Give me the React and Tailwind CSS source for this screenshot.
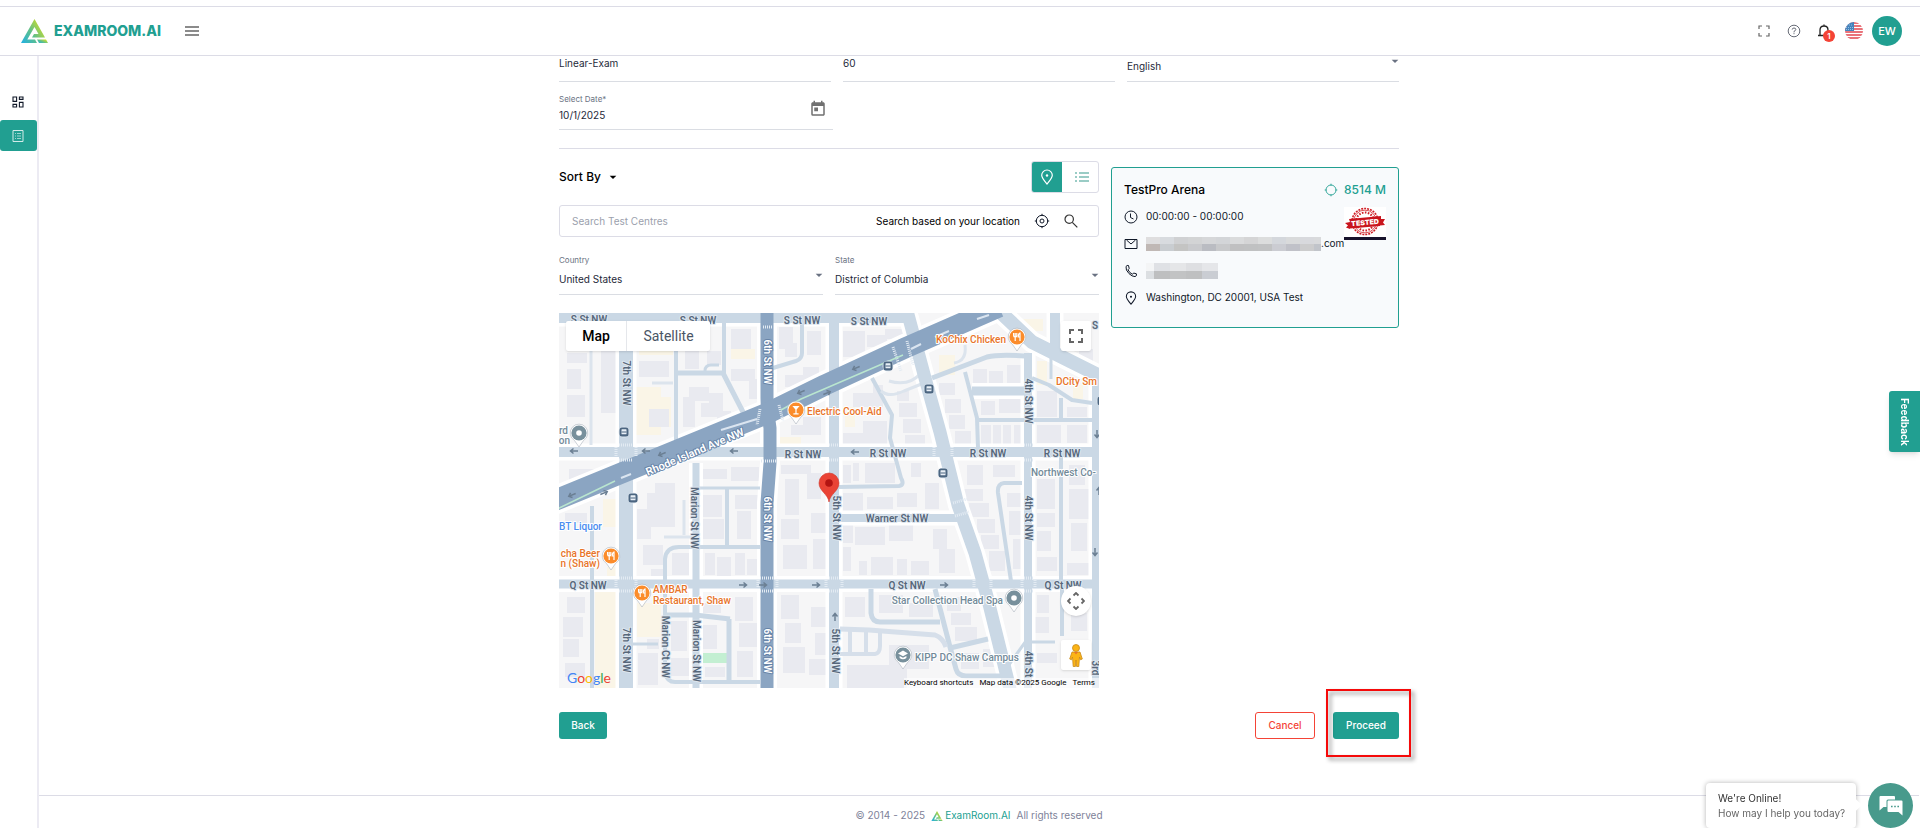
import React, { useState } from "react";
import { MdArrowDropDown, MdToday } from "react-icons/md";

// ----------------- Map data -----------------
// [path, width, color]
const ROAD = "#cad8e5";
const HIGHWAY = "#8ba5c2";

const STREETS = [
  // alleys
  ["M32 9V132", 3, "#dce4ed"],
  ["M33 193V375", 4, ROAD],
  ["M117 10V134", 4, ROAD],
  ["M117 60H164L184 99", 5, ROAD],
  ["M165 9V60", 4, ROAD],
  ["M93 70H114", 3, "#dce4ed"],
  ["M146 58Q146 52 152 52H160", 3, ROAD],
  ["M214 55L237 48Q243 46 243 40V9", 4, ROAD],
  ["M137 175H201", 3, ROAD],
  ["M168 175V234", 4, ROAD],
  ["M201 234H120Q107 234 106 246V360Q108 369 116 369H201", 4, ROAD],
  ["M106 302H136L171 306", 5, ROAD],
  ["M170 306V369", 5, ROAD],
  ["M74 331H99", 3, ROAD],
  ["M105 224H137M125 187V222", 3, "#dce4ed"],
  ["M313 65L333 102L331 125L342 165Q346 172 340 173L279 174", 4, ROAD],
  ["M373 65L428 44Q440 41 466 43", 5, ROAD],
  ["M406 59L418 105L419 135", 4, ROAD],
  ["M413 78H466", 9, ROAD],
  ["M418 107H533", 4, ROAD],
  ["M473 65L490 72L513 87L533 90M502 85V106", 4, ROAD],
  ["M492 30V66", 3, ROAD],
  ["M502 143V268M503 276V323", 4, ROAD],
  ["M463 170H445Q438 171 439 180L452 268", 4, ROAD],
  ["M312 276V300Q313 309 321 309H381", 5, ROAD],
  ["M376 276L391 334L397 356Q399 363 407 363H443", 5, ROAD],
  ["M391 335L429 326", 5, ROAD],
  ["M281 316L310 317L376 322Q384 325 387 334", 5, "#d6dfea"],
  ["M281 341H316Q321 340 321 333V319M291 318V341M307 318V341", 4, "#d6dfea"],
  ["M469 329H496M449 353L467 328", 3, ROAD],
  ["M322 78Q330 85 345 78L365 70M330 68Q350 74 362 60M395 50Q408 48 406 32", 3, "#dce4ed"],
  // main streets
  ["M0 4H350", 12, ROAD],
  ["M0 139H540", 10, ROAD],
  ["M0 271H540", 9, ROAD],
  ["M275 205H399", 8, ROAD],
  ["M67 0V375", 14, ROAD],
  ["M137 150V375", 7, ROAD],
  ["M275 0V375", 10, ROAD],
  ["M469 40V375", 8, ROAD],
  ["M538 60V375", 10, ROAD],
  ["M496 0V36", 10, ROAD],
  ["M436 -6L473 29L545 65", 14, ROAD],
  ["M347 -6L366 65L381 119L399 192L416 240L429 287L452 380", 13, ROAD],
  // arterials
  ["M208 -4V85Q208 95 211 115V150L208 190V375", 13, HIGHWAY],
  ["M-8 189L209 100L266 72L346 35L440 -6", 21, HIGHWAY],
];

const BUILDINGS = [
  [8, 20, 18, 16], [8, 40, 20, 10], [8, 56, 14, 20], [8, 82, 18, 22], [42, 20, 16, 80],
  [80, 48, 30, 16], [90, 96, 20, 18], [126, 18, 18, 10], [126, 34, 14, 22], [148, 38, 14, 14],
  [172, 16, 20, 20], [172, 56, 24, 12], [190, 66, 12, 20], [124, 84, 12, 30], [130, 74, 20, 14],
  [142, 90, 22, 14], [150, 80, 14, 20], [158, 98, 14, 14], [220, 14, 14, 22], [226, 30, 12, 14],
  [248, 18, 14, 24], [226, 62, 18, 12], [244, 54, 16, 14], [10, 156, 44, 14], [232, 112, 24, 10],
  [244, 104, 18, 18], [144, 156, 24, 10], [172, 154, 28, 14], [143, 182, 20, 22], [143, 206, 22, 20],
  [176, 182, 24, 14], [178, 198, 14, 28], [88, 180, 28, 34], [96, 170, 20, 14], [78, 196, 14, 30],
  [84, 232, 20, 20], [92, 256, 12, 8], [113, 240, 18, 22], [146, 240, 10, 22], [158, 244, 14, 20],
  [176, 240, 10, 22], [188, 246, 12, 16], [6, 200, 22, 10], [222, 152, 30, 9], [226, 166, 14, 36],
  [222, 206, 18, 20], [224, 232, 24, 24], [252, 200, 18, 20], [254, 226, 14, 30], [248, 160, 14, 26],
  [8, 284, 18, 16], [4, 304, 20, 20], [4, 326, 16, 18], [6, 350, 20, 14], [79, 340, 20, 32],
  [88, 326, 12, 10], [112, 308, 16, 30], [112, 345, 18, 18], [144, 290, 18, 10], [144, 312, 14, 24],
  [146, 354, 20, 10], [176, 284, 18, 24], [180, 310, 18, 24], [178, 338, 16, 26], [222, 282, 18, 24],
  [226, 310, 16, 20], [224, 334, 22, 26], [252, 294, 16, 20], [256, 320, 14, 22], [250, 346, 20, 16],
  [284, 18, 22, 26], [308, 22, 20, 12], [326, 16, 18, 10], [284, 50, 8, 12], [284, 120, 24, 14],
  [304, 108, 24, 26], [294, 80, 20, 14], [314, 72, 10, 22], [338, 78, 12, 10], [340, 90, 18, 14],
  [344, 106, 18, 14], [346, 122, 20, 12], [284, 152, 8, 18], [294, 150, 6, 18], [306, 150, 30, 20],
  [284, 180, 20, 18], [308, 184, 26, 12], [338, 180, 20, 14], [352, 150, 10, 14], [366, 170, 14, 26],
  [284, 212, 10, 18], [296, 214, 30, 18], [330, 212, 24, 16], [284, 234, 8, 24], [300, 248, 8, 14],
  [312, 244, 22, 18], [338, 246, 10, 16], [352, 248, 18, 14], [374, 216, 14, 20], [380, 236, 16, 24],
  [386, 86, 16, 14], [390, 102, 16, 14], [396, 118, 16, 14], [380, 70, 16, 12], [414, 56, 14, 14],
  [448, 52, 14, 20], [430, 58, 14, 12], [422, 88, 14, 14], [440, 86, 24, 14], [422, 112, 10, 20],
  [434, 112, 8, 20], [444, 112, 8, 20], [455, 112, 8, 20], [478, 112, 24, 18], [508, 112, 20, 18],
  [478, 78, 20, 26], [508, 94, 20, 10], [408, 152, 16, 20], [402, 176, 22, 12], [410, 190, 20, 14],
  [418, 206, 18, 14], [422, 222, 18, 14], [430, 238, 16, 20], [434, 152, 22, 12], [448, 180, 16, 14],
  [450, 198, 14, 24], [454, 226, 10, 30], [478, 166, 18, 30], [478, 200, 18, 14], [478, 218, 14, 20],
  [478, 244, 20, 14], [510, 152, 16, 20], [510, 176, 20, 30], [512, 210, 16, 28], [508, 250, 22, 12],
  [286, 284, 20, 20], [320, 282, 24, 18], [350, 290, 24, 14], [388, 284, 14, 14], [392, 300, 20, 12],
  [396, 314, 22, 14], [402, 340, 18, 16], [424, 336, 12, 18], [288, 352, 60, 26], [330, 332, 40, 24],
  [478, 282, 12, 18], [476, 304, 14, 16], [512, 300, 16, 18], [478, 340, 20, 10], [520, 36, 14, 14],
];

const SHOPS = [
  [80, 18, 34, 24], [76, 74, 26, 48], [100, 84, 12, 30], [44, 186, 16, 28], [48, 254, 12, 10],
  [36, 278, 24, 97], [78, 290, 24, 34], [172, 36, 24, 10], [220, 124, 22, 12], [286, 94, 10, 20],
  [380, 42, 16, 20], [478, 48, 10, 24], [464, 6, 20, 12], [514, 72, 10, 14], [346, 130, 14, 6],
];

// [text, x, y, rotate, light]
const STREET_LABELS = [
  ["S St NW", 30, 6], ["S St NW", 139, 7], ["S St NW", 243, 7], ["S St NW", 310, 8],
  ["R St NW", 244, 141], ["R St NW", 329, 140], ["R St NW", 429, 140], ["R St NW", 503, 140],
  ["Q St NW", 29, 272], ["Q St NW", 348, 272], ["Q St NW", 504, 272], ["Warner St NW", 338, 205],
  ["7th St NW", 67, 70, 90], ["7th St NW", 67, 337, 90],
  ["6th St NW", 208, 49, 90, true], ["6th St NW", 208, 206, 90, true], ["6th St NW", 208, 338, 90, true],
  ["5th St NW", 277, 205, 90], ["5th St NW", 276, 338, 90],
  ["4th St NW", 469, 88, 90], ["4th St NW", 469, 205, 90], ["4th St", 469, 351, 90],
  ["Marion St NW", 135, 205, 90], ["Marion St NW", 137, 338, 90], ["Marion Ct NW", 106, 334, 90],
  ["3rd", 536, 355, 90], ["S", 536, 12],
];

// [text, x, y, anchor, color]
const ORANGE = "#e8742a";
const SLATE = "#728a99";
const PLACES = [
  ["Electric Cool-Aid", 248, 98, "start", ORANGE],
  ["KoChix Chicken", 447, 26, "end", ORANGE],
  ["DCity Sm", 497, 68, "start", ORANGE],
  ["cha Beer", 41, 240, "end", ORANGE],
  ["n (Shaw)", 41, 250, "end", ORANGE],
  ["AMBAR", 94, 276, "start", ORANGE],
  ["Restaurant, Shaw", 94, 287, "start", ORANGE],
  ["BT Liquor", 0, 213, "start", "#4a8df0"],
  ["rd", 9, 117, "end", SLATE],
  ["on", 11, 127, "end", SLATE],
  ["Northwest Co-", 472, 159, "start", SLATE],
  ["Star Collection Head Spa", 444, 287, "end", SLATE],
  ["KIPP DC Shaw Campus", 356, 344, "start", SLATE],
];

const PINS = [
  [237, 97, "#fb8c2b", "bar"], [458, 24, "#fb8c2b", "food"], [52, 243, "#fb8c2b", "food"], [83, 280, "#fb8c2b", "food"],
  [20, 120, "#78909c", "dot"], [455, 285, "#78909c", "dot"], [344, 342, "#78909c", "school"],
];

const BUS_STOPS = [[65, 119], [74, 185], [329, 53], [370, 76], [384, 160], [543, 88]];

// [x, y, rotation], pointing right at 0
const ARROWS = [
  [15, 138, 180], [87, 138, 180], [103, 141, 157], [175, 138, 180], [296, 139, 180], [13, 182, 157], [45, 180, -23],
  [242, 79, 157], [268, 80, -23], [297, 55, 157], [184, 272, 0], [204, 272, 0], [257, 272, 0], [385, 272, 0],
  [276, 304, -90], [538, 121, 90], [536, 239, 90], [540, 178, -90],
];

function Pin({ x, y, color, kind }) {
  return (
    <g transform={`translate(${x} ${y})`}>
      <path d="M0 14L-4.5 7.5A8.8 8.8 0 1 1 4.5 7.5Z" fill="#fff" stroke="#9aa5b1" strokeWidth="0.5" />
      <circle r="7.6" fill={color} />
      {kind === "dot" && <circle r="2.8" fill="#fff" />}
      {kind === "bar" && (
        <path d="M-3.6 -4H3.6L0.6 -0.4V3.2H2.6V4.4H-2.6V3.2H-0.6V-0.4Z" fill="#fff" />
      )}
      {kind === "food" && (
        <path
          d="M-3.4 -4V-1.6Q-3.4 0 -1.8 0V4M-0.2 -4V-1.6Q-0.2 0 -1.8 0V-4M3 4V-4Q1.2 -3.4 1.2 0H3"
          fill="none"
          stroke="#fff"
          strokeWidth="1.2"
        />
      )}
      {kind === "school" && (
        <path d="M-5 -1.6L0 -4.4L5 -1.6L0 1.2ZM-3.4 1V3Q0 5.6 3.4 3V1L0 2.8Z" fill="#fff" />
      )}
    </g>
  );
}

function StreetMap() {
  return (
    <svg
      viewBox="0 0 540 375"
      preserveAspectRatio="xMidYMid slice"
      className="block h-full w-full"
      role="img"
      aria-label="Street map of test centres"
    >
      <rect width="540" height="375" fill="#f6f6f7" />
      <g fill="#faf5e7">
        {SHOPS.map(([x, y, w, h], i) => (
          <rect key={i} x={x} y={y} width={w} height={h} />
        ))}
      </g>
      <g fill="#e9eaf0">
        {BUILDINGS.map(([x, y, w, h], i) => (
          <rect key={i} x={x} y={y} width={w} height={h} />
        ))}
      </g>
      <rect x="143" y="340" width="25" height="10" fill="#c3efd2" />
      <g fill="none" strokeLinejoin="round">
        {STREETS.filter((s) => s[1] > 5).map(([d, w], i) => (
          <path key={i} d={d} stroke="#fff" strokeWidth={w + 7} />
        ))}
        {STREETS.map(([d, w, color], i) => (
          <path key={i} d={d} stroke={color} strokeWidth={w} />
        ))}
        {/* crosswalks */}
        <g stroke="#e3ebf3" strokeWidth="3" strokeDasharray="1 1">
          <path d="M60 132H74M60 147H74M60 265H74M60 278H74M57 134V144M77 134V144M57 267V276M77 267V276" />
          <path d="M202 148H217M201 265H215M201 278H215M204 14H214M199 267V276M218 267V276" />
          <path d="M270 132H280M270 147H280M270 265H280M270 278H280M267 267V276M283 267V276" />
          <path d="M465 132H474M465 147H474M465 265H474M465 278H474M463 267V276M476 267V276M375 134V144M393 134V144M415 267V276M432 267V276" />
          <path d="M348 28L354 52M334 34L342 58M201 96L198 112M220 92L224 108M394 190L408 186M396 203L410 199" />
        </g>
        <path d="M-4 197L56 168" stroke="#b9e6cf" strokeWidth="1.5" />
        <path d="M222 97L242 86M242 86L344 42" stroke="#b9e6cf" strokeWidth="1.5" />
        <path d="M62 165L72 161M162 117L198 106M352 36L362 31M376 24L390 18M418 6L430 2" stroke="#dbe5f0" strokeWidth="2" />
      </g>
      {ARROWS.map(([x, y, r], i) => (
        <path
          key={i}
          d="M-4 0H3M0.5 -2.5L3.5 0L0.5 2.5"
          transform={`translate(${x} ${y}) rotate(${r})`}
          fill="none"
          stroke="#6b7f93"
          strokeWidth="1.5"
        />
      ))}
      {BUS_STOPS.map(([x, y], i) => (
        <g key={i} transform={`translate(${x} ${y})`}>
          <circle r="5.5" fill="#dfe8f1" />
          <rect x="-4.5" y="-4.5" width="9" height="9" rx="2.5" fill="#4b6580" />
          <rect x="-2.5" y="-2.8" width="5" height="5" rx="0.5" fill="#e8eff6" />
          <path d="M-2.5 0H2.5" stroke="#4b6580" />
        </g>
      ))}
      <g
        fontFamily="Roboto, sans-serif"
        fontSize="10"
        fontWeight="600"
        textAnchor="middle"
        dominantBaseline="central"
        paintOrder="stroke"
        strokeWidth="2"
        strokeLinejoin="round"
      >
        {STREET_LABELS.map(([text, x, y, r = 0, light], i) => (
          <text
            key={i}
            transform={`translate(${x} ${y}) rotate(${r})`}
            fill={light ? "#fff" : "#56677a"}
            stroke={light ? "#6784a8" : "#dde6ef"}
          >
            {text}
          </text>
        ))}
        <text transform="translate(136 139) rotate(-23)" fontSize="11" fill="#fff" stroke="#6784a8">
          Rhode Island Ave NW
        </text>
      </g>
      {PINS.map(([x, y, color, kind]) => (
        <Pin key={`${x}-${y}`} x={x} y={y} color={color} kind={kind} />
      ))}
      <g
        fontFamily="Roboto, sans-serif"
        fontSize="10"
        fontWeight="500"
        dominantBaseline="central"
        paintOrder="stroke"
        stroke="#fff"
        strokeWidth="2"
        strokeLinejoin="round"
      >
        {PLACES.map(([text, x, y, anchor, color]) => (
          <text key={text} x={x} y={y} textAnchor={anchor} fill={color}>
            {text}
          </text>
        ))}
      </g>
      {/* selected centre */}
      <path
        d="M270 189C269 181 260 178 260 170A10 10 0 0 1 280 170C280 178 271 181 270 189Z"
        fill="#ea4335"
        stroke="#d0352a"
        strokeWidth="0.6"
      />
      <circle cx="270" cy="170" r="3.8" fill="#b31412" />
    </svg>
  );
}

// ----------------- Small icons -----------------
function LogoMark({ className, id }) {
  return (
    <svg viewBox="0 0 27 24" className={className} aria-hidden="true">
      <defs>
        <linearGradient id={id} x1="0" y1="1" x2="1" y2="0.3">
          <stop offset="0" stopColor="#1fb0e6" />
          <stop offset="0.5" stopColor="#5fc08a" />
          <stop offset="1" stopColor="#d8e021" />
        </linearGradient>
      </defs>
      <path d="M13.5 0L24 18.5H11L13 15H17.5L13.5 8L6.3 20.5H14L16 24H0Z" fill={`url(#${id})`} />
      <path d="M16 20.5H25L27 24H18Z" fill={`url(#${id})`} />
    </svg>
  );
}

function PinIcon({ className }) {
  return (
    <svg viewBox="0 0 16 16" fill="none" stroke="currentColor" className={className} aria-hidden="true">
      <path d="M8 15C5 11.5 2.7 9 2.7 6.3A5.3 5.3 0 0 1 13.3 6.3C13.3 9 11 11.5 8 15Z" strokeWidth="1.2" />
      <circle cx="8" cy="6.5" r="1.2" fill="currentColor" stroke="none" />
    </svg>
  );
}

function ClockIcon() {
  return (
    <svg viewBox="0 0 14 14" fill="none" stroke="currentColor" className="size-[14px]" aria-hidden="true">
      <circle cx="7" cy="7" r="6" />
      <path d="M6.5 3.5V7.5L9.5 9" />
    </svg>
  );
}

function MailIcon() {
  return (
    <svg viewBox="0 0 14 14" fill="none" stroke="currentColor" className="size-[14px]" aria-hidden="true">
      <path d="M1 2.5H13V11.5H1ZM2.5 3L7 7L11.5 3" />
    </svg>
  );
}

function PhoneIcon() {
  return (
    <svg viewBox="0 0 14 14" fill="none" stroke="currentColor" className="size-[14px]" aria-hidden="true">
      <path d="M2 2.5Q3 1 4.5 1.5L5.2 4.5L4 5.8Q5.5 9 8.5 10.3L9.6 9L12.4 9.8Q13.2 12 11 12.6Q8 12.6 5 9.6Q1.4 6 2 2.5Z" />
    </svg>
  );
}

function TargetIcon({ className, dot }) {
  return (
    <svg viewBox="0 0 16 16" fill="none" stroke="currentColor" className={className} aria-hidden="true">
      <circle cx="8" cy="8" r="5.7" />
      {dot && <circle cx="8" cy="8" r="2" />}
      <path d="M8 0.8V3M8 13V15.2M0.8 8H3M13 8H15.2" />
    </svg>
  );
}

function FlagIcon() {
  return (
    <svg viewBox="0 0 18 18" className="size-[18px]" aria-hidden="true">
      <defs>
        <clipPath id="flag-round">
          <circle cx="9" cy="9" r="9" />
        </clipPath>
      </defs>
      <g clipPath="url(#flag-round)">
        <rect width="18" height="18" fill="#fff" />
        <path d="M0 1H18M0 4H18M0 7H18M0 10H18M0 13H18M0 16H18" stroke="#e2454f" strokeWidth="1.4" />
        <rect width="9" height="9" fill="#4584bd" />
        <path d="M2 3H8M1 5.5H8M1 7.5H8" stroke="#a9cbe8" strokeWidth="0.8" strokeDasharray="1 1" />
      </g>
    </svg>
  );
}

function TestedStamp() {
  return (
    <svg viewBox="0 0 42 33" className="h-[33px] w-[42px]" aria-hidden="true">
      <rect width="42" height="33" fill="#fff" />
      <g fill="none" stroke="#cf1f26">
        <circle cx="21" cy="14.5" r="13" strokeWidth="1.6" strokeDasharray="2 1" />
        <circle cx="21" cy="14.5" r="11.4" strokeWidth="0.8" />
        <circle cx="21" cy="14.5" r="9" strokeWidth="2" strokeDasharray="1.6 1.4" />
      </g>
      <path d="M1 16L6 15L5 12L37 9L37 12L41 12L39 15.5L41 18L36 18.5V19L6 21.5V22L2 20.5L4 18.5Z" fill="#c9151e" />
      <text
        x="21"
        y="18"
        textAnchor="middle"
        fontSize="7"
        fontWeight="900"
        fontFamily="Inter, sans-serif"
        fill="#fff"
        transform="rotate(-5 21 15)"
      >
        TESTED
      </text>
      <rect y="30" width="42" height="3" fill="#17122b" />
    </svg>
  );
}

// Mosaic over private contact details
function Redacted({ rows, cell, className, width }) {
  return (
    <svg viewBox={`0 0 ${width} ${cell[1] * 2}`} className={className} aria-label="Hidden">
      {rows.map((row, r) =>
        row.map((color, c) => (
          <rect key={`${r}-${c}`} x={c * cell[0]} y={r * cell[1]} width={cell[0]} height={cell[1]} fill={color} />
        ))
      )}
    </svg>
  );
}

const MAIL_MOSAIC = [
  ["#dfdedf", "#d8dbdf", "#d0d1d3", "#d3d4d5", "#d6d7d9", "#d3d5d8", "#dadbdc", "#d5d5d6", "#dcdddd", "#d4d7dc", "#d9dadb", "#d8d9dd", "#d9dadc"],
  ["#c0b8b5", "#c9cdd1", "#c4c4c3", "#c9cacd", "#babcc2", "#c8c9cb", "#c0c0c1", "#c0c1c2", "#c1c2c3", "#cbccd2", "#c0c1c8", "#cccccd", "#c1c4ca"],
];

const PHONE_MOSAIC = [
  ["#f4f5f6", "#dfe1e5", "#dfe1e5", "#e5e6e8", "#e5e6e8", "#dedfe2", "#dedfe2", "#e5e6e9", "#e5e6e9"],
  ["#dcdfe2", "#bebfc0", "#bebfc0", "#c2c3c4", "#c2c3c4", "#bfc0c1", "#bfc0c1", "#cacdd3", "#cacdd3"],
];

function SelectField({ id, label, value, options }) {
  return (
    <div className="relative border-b border-gray-300/80 pb-[7px]">
      <label htmlFor={id} className="block text-[8px] leading-[10px] text-gray-500">
        {label}
      </label>
      <select
        id={id}
        defaultValue={value}
        className="mt-1.5 block h-4 w-full appearance-none bg-transparent text-[10px] leading-4 text-gray-800 outline-none"
      >
        {options.map((o) => (
          <option key={o}>{o}</option>
        ))}
      </select>
      <MdArrowDropDown className="pointer-events-none absolute right-[-4px] top-3 size-4 text-gray-500" />
    </div>
  );
}

function Header() {
  return (
    <header className="mt-1.5 flex h-[50px] items-center border-y border-[#dcdce6] pl-[21px] pr-[18px]">
      <a href="#home" className="flex items-center gap-1.5 text-[#219f91]">
        <LogoMark id="logo-header" className="h-6 w-[27px]" />
        <span className="text-[14px] font-extrabold leading-4">EXAMROOM.AI</span>
      </a>
      <button aria-label="Toggle menu" className="ml-6">
        <svg viewBox="0 0 14 10" className="h-[10px] w-[14px]" stroke="#666" strokeWidth="1.4">
          <path d="M0 1H14M0 5H14M0 9H14" />
        </svg>
      </button>
      <div className="ml-auto flex items-center">
        <button aria-label="Full screen" className="flex w-[30px] justify-center">
          <svg viewBox="0 0 12 12" className="size-3" fill="none" stroke="#666" strokeWidth="1.2">
            <path d="M1 4V1H4M8 1H11V4M11 8V11H8M4 11H1V8" />
          </svg>
        </button>
        <button aria-label="Help" className="flex w-[30px] justify-center">
          <svg viewBox="0 0 14 14" className="size-[14px]" fill="none" stroke="#555a66" strokeWidth="0.9">
            <circle cx="7" cy="7" r="5.8" />
            <path d="M5.2 5.6Q5.3 4 7 4Q8.8 4 8.8 5.5Q8.8 6.5 7 7.4V8.4M7 9.2V10.2" />
          </svg>
        </button>
        <button aria-label="Notifications" className="relative flex w-[30px] justify-center">
          <svg viewBox="0 0 14 14" className="size-[14px]" fill="none" stroke="#222" strokeWidth="1.3">
            <path d="M1 11.5H13M3 11.5V6Q3 2 7 2Q11 2 11 6V11.5M7 0.5V2" />
          </svg>
          <span className="absolute left-3.5 top-1.5 flex size-3 items-center justify-center rounded-full bg-[#f44336] text-[8px] font-semibold leading-none text-white">
            1
          </span>
        </button>
        <button aria-label="Language" className="flex w-[30px] justify-center">
          <FlagIcon />
        </button>
        <button className="ml-[3px] flex size-[30px] items-center justify-center rounded-full bg-[#219f91] text-[11px] font-medium text-white">
          EW
        </button>
      </div>
    </header>
  );
}

function Sidebar() {
  return (
    <aside className="w-[39px] shrink-0 border-r-2 border-[#ecebf3] pt-[30px]">
      <nav className="flex flex-col gap-[3px]">
        <a href="#dashboard" aria-label="Dashboard" className="flex h-[31px] items-center pl-3 text-gray-900">
          <svg viewBox="0 0 12 12" className="size-3" fill="none" stroke="currentColor" strokeWidth="1.1">
            <path d="M1 1H4.6V5.4H1ZM7.4 1H11V3.4H7.4ZM7.4 6.4H11V11H7.4ZM1 8.4H4.6V11H1Z" />
          </svg>
        </a>
        <a
          href="#exams"
          aria-label="Exams"
          className="flex h-[31px] items-center rounded-[3px] bg-[#219f91] pl-3 text-white"
        >
          <svg viewBox="0 0 12 12" className="size-3 opacity-80" fill="none" stroke="currentColor">
            <path d="M1 0.5H11V11.5H1Z" />
            <path d="M3 3.5H4M5 3.5H9M3 6H4M5 6H9M3 8.5H4M5 8.5H9" opacity="0.7" />
          </svg>
        </a>
      </nav>
    </aside>
  );
}

function CentreCard() {
  return (
    <section className="relative mt-[18px] rounded-[3px] border border-[#219f91] bg-[#f8fafc] px-3 pb-4 pt-2 text-[10px] text-gray-900">
      <div className="flex h-[27px] items-center justify-between">
        <h2 className="text-[12px] font-medium text-black">TestPro Arena</h2>
        <p className="flex items-center gap-1.5 text-[12px] font-medium text-[#219f91]">
          <TargetIcon className="size-[14px]" />
          8514 M
        </p>
      </div>
      <p className="flex h-[27px] items-center gap-2">
        <ClockIcon />
        00:00:00 - 00:00:00
      </p>
      <p className="flex h-[27px] items-center gap-2">
        <MailIcon />
        <span className="flex items-center">
          <Redacted rows={MAIL_MOSAIC} cell={[14, 7]} width={175} className="h-[14px] w-[175px]" />
          .com
        </span>
      </p>
      <p className="flex h-[27px] items-center gap-2">
        <PhoneIcon />
        <Redacted rows={PHONE_MOSAIC} cell={[8, 8]} width={72} className="h-4 w-[72px]" />
      </p>
      <p className="flex h-[27px] items-center gap-2">
        <PinIcon className="size-[14px]" />
        Washington, DC 20001, USA Test
      </p>
      <div className="absolute right-3 top-[39px]">
        <TestedStamp />
      </div>
    </section>
  );
}

function MapPanel() {
  return (
    <div className="relative mt-[18px] h-[375px] overflow-hidden font-[Roboto,sans-serif]">
      <StreetMap />
      <div className="absolute left-[7px] top-2 flex h-[30px] rounded-[2px] bg-white text-[14px] shadow">
        <button className="w-[61px] border-r border-gray-200 font-medium text-black">Map</button>
        <button className="w-[83px] text-gray-600">Satellite</button>
      </div>
      <button
        aria-label="Toggle fullscreen view"
        className="absolute right-2 top-2 flex size-[30px] items-center justify-center rounded-[2px] bg-white shadow"
      >
        <svg viewBox="0 0 14 14" className="size-[14px]" fill="none" stroke="#666" strokeWidth="2">
          <path d="M1 5V1H5M9 1H13V5M13 9V13H9M5 13H1V9" />
        </svg>
      </button>
      <div className="absolute bottom-[18px] right-2 flex flex-col gap-6">
        <button
          aria-label="Map camera controls"
          className="flex size-[30px] items-center justify-center rounded-full bg-white shadow"
        >
          <svg viewBox="0 0 18 18" className="size-[18px]" fill="none" stroke="#666" strokeWidth="1.8">
            <path d="M6.5 3.5L9 1L11.5 3.5M6.5 14.5L9 17L11.5 14.5M3.5 6.5L1 9L3.5 11.5M14.5 6.5L17 9L14.5 11.5" />
          </svg>
        </button>
        <button
          aria-label="Street View"
          className="flex size-[30px] items-center justify-center rounded-[2px] bg-white shadow"
        >
          <svg viewBox="0 0 14 23" className="h-[23px] w-[14px]">
            <path d="M3 8H11L13.3 15L11.5 15.8L10.5 13L9.8 22.5H7.6L7 16L6.4 22.5H4.2L3.5 13L2.5 15.8L0.7 15Z" fill="#fbb416" stroke="#c98a1b" strokeWidth="0.8" />
            <circle cx="7" cy="4" r="3.5" fill="#fbb416" stroke="#c98a1b" strokeWidth="0.8" />
            <path d="M5 8H9L7 10.5Z" fill="#e8742a" />
          </svg>
        </button>
      </div>
      <div className="absolute bottom-0.5 left-2 font-[Lato,sans-serif] text-[14px] leading-4 text-[#4285f4]" aria-label="Google">
        G<span className="text-[#ea4335]">o</span>
        <span className="text-[#fbbc05]">o</span>g<span className="text-[#34a853]">l</span>
        <span className="text-[#ea4335]">e</span>
      </div>
      <div className="absolute bottom-0 right-0 flex gap-1.5 bg-white/60 pr-1 text-[8px] leading-[10px] text-black">
        <button>Keyboard shortcuts</button>
        <span>Map data ©2025 Google</span>
        <a href="#terms">Terms</a>
      </div>
    </div>
  );
}

export default function App() {
  const [view, setView] = useState("map");

  return (
    <div className="flex min-h-screen flex-col bg-white font-[Inter,sans-serif] text-gray-900">
      <Header />
      <div className="flex flex-1">
        <Sidebar />
        <div className="flex min-w-0 flex-1 flex-col pr-px">
          <main className="mx-auto w-full max-w-[840px] pb-10 text-[10px]">
            <div className="grid grid-cols-3 gap-3">
              <input
                aria-label="Exam name"
                defaultValue="Linear-Exam"
                className="h-[26px] min-w-0 border-b border-gray-300/80 pb-3 text-gray-800 outline-none"
              />
              <input
                aria-label="Duration"
                defaultValue="60"
                className="h-[26px] min-w-0 border-b border-gray-300/80 pb-3 text-gray-800 outline-none"
              />
              <div className="relative border-b border-gray-300/80">
                <select
                  aria-label="Language"
                  className="mt-0.5 block h-4 w-full appearance-none bg-transparent leading-4 text-gray-800 outline-none"
                >
                  <option>English</option>
                </select>
                <MdArrowDropDown className="pointer-events-none absolute right-[-4px] top-[-3px] size-4 text-gray-500" />
              </div>
            </div>

            <div className="mt-3 flex w-[274px] items-start justify-between border-b border-gray-300/80 pb-1.5">
              <div>
                <label htmlFor="exam-date" className="block text-[8px] leading-[10px] text-gray-500">
                  Select Date*
                </label>
                <input
                  id="exam-date"
                  defaultValue="10/1/2025"
                  className="mt-[3px] block h-4 w-40 text-gray-800 outline-none"
                />
              </div>
              <button aria-label="Open calendar" className="mr-1.5 mt-1.5">
                <MdToday className="size-[18px] text-[#707070]" />
              </button>
            </div>

            <hr className="mt-[18px] border-[#dcdce6]" />

            <div className="grid grid-cols-[minmax(0,1fr)_288px] items-start gap-3">
              <div className="pt-3">
                <div className="flex items-center justify-between">
                  <button className="flex items-center gap-1 text-[12px] font-medium text-black">
                    Sort By
                    <MdArrowDropDown className="size-4" />
                  </button>
                  <div className="flex h-8 overflow-hidden rounded-[3px] border border-[#dcdce6]">
                    <button
                      aria-label="Map view"
                      aria-pressed={view === "map"}
                      onClick={() => setView("map")}
                      className="flex w-[30px] items-center justify-center bg-[#219f91] text-white"
                    >
                      <PinIcon className="size-4" />
                    </button>
                    <button
                      aria-label="List view"
                      aria-pressed={view === "list"}
                      onClick={() => setView("list")}
                      className="flex w-9 items-center justify-center pl-1"
                    >
                      <svg viewBox="0 0 14 10" className="h-[10px] w-[14px]" stroke="#79bcb3" strokeWidth="1.4">
                        <path d="M0 1H2M4 1H14M0 5H2M4 5H14M0 9H2M4 9H14" />
                      </svg>
                    </button>
                  </div>
                </div>

                <div className="mt-3 flex h-8 items-center rounded-[3px] border border-[#dcdce6] pl-3 pr-[20px]">
                  <input
                    aria-label="Search Test Centres"
                    placeholder="Search Test Centres"
                    className="min-w-0 flex-1 outline-none placeholder:text-[#9b9fad]"
                  />
                  <span className="text-black">Search based on your location</span>
                  <button aria-label="Use my location" className="ml-3.5">
                    <TargetIcon dot className="size-4" />
                  </button>
                  <button aria-label="Search" className="ml-3.5">
                    <svg viewBox="0 0 14 14" className="size-[14px]" fill="none" stroke="#333" strokeWidth="1.2">
                      <circle cx="5.2" cy="5.2" r="4.2" />
                      <path d="M8.3 8.3L13.3 13.3" />
                    </svg>
                  </button>
                </div>

                <div className="mt-[18px] grid grid-cols-2 gap-3">
                  <SelectField id="country" label="Country" value="United States" options={["United States", "Canada"]} />
                  <SelectField
                    id="state"
                    label="State"
                    value="District of Columbia"
                    options={["District of Columbia", "Virginia"]}
                  />
                </div>

                <MapPanel />
              </div>
              <CentreCard />
            </div>

            <div className="mt-6 flex h-[27px] font-medium">
              <button className="w-12 rounded-[3px] bg-[#219f91] text-white">Back</button>
              <button className="ml-auto w-[60px] rounded-[3px] border border-[#f44336] text-[#f44336]">Cancel</button>
              <div className="relative ml-[18px] flex">
                <button className="w-[66px] rounded-[3px] bg-[#219f91] text-white">Proceed</button>
                {/* highlight frame */}
                <div className="pointer-events-none absolute -left-[7px] -top-[23px] h-[68px] w-[85px] border-2 border-[#f50a0a] drop-shadow-[3px_3px_2px_rgba(0,0,0,0.45)]" />
              </div>
            </div>
          </main>

          <footer className="mt-auto flex h-[33px] items-center justify-center border-t border-[#dcdce6] pt-[7px] text-[10px] text-[#7e8299]">
            <span>© 2014 - 2025</span>
            <a href="#examroom" className="ml-1.5 flex items-center gap-0.5 text-[#219f91]">
              <LogoMark id="logo-footer" className="h-[10px] w-3" />
              ExamRoom.AI
            </a>
            <span className="ml-1.5">All rights reserved</span>
          </footer>
        </div>
      </div>

      <button className="fixed right-0 top-[391px] flex h-[61px] w-[31px] items-center justify-center rounded-l-[3px] bg-[#219f91] text-[10px] font-bold text-white shadow-md [writing-mode:vertical-rl]">
        Feedback
      </button>

      <div className="fixed bottom-0 right-[7px] flex items-center gap-3">
        <div className="relative h-[45px] w-[150px] rounded-[4px] bg-white px-3 pt-2 text-[10px] leading-[15px] shadow-[0_0_5px_rgba(0,0,0,0.3)]">
          <p className="text-[#333]">We're Online!</p>
          <p className="whitespace-nowrap text-[#666]">How may I help you today?</p>
          <span className="absolute -right-1 top-[18px] size-2 rotate-45 bg-white" />
        </div>
        <button aria-label="Open chat" className="flex size-[45px] items-center justify-center rounded-full bg-[#489a8c]">
          <svg viewBox="0 0 24 21" className="h-[21px] w-6">
            <path d="M1.5 1H15Q16 1 16 2V4.5H9Q7.5 4.5 7.5 6V12H4.5L0.5 15.5V2Q0.5 1 1.5 1Z" fill="#fff" />
            <path d="M9.5 5.5H22.5Q23.5 5.5 23.5 6.5V20.5L19.5 17H9.5Q8.5 17 8.5 16V6.5Q8.5 5.5 9.5 5.5Z" fill="#fff" />
            <path d="M12 11.5H13.6M15.2 11.5H16.8M18.4 11.5H20" stroke="#489a8c" strokeWidth="1.5" />
          </svg>
        </button>
      </div>
    </div>
  );
}
